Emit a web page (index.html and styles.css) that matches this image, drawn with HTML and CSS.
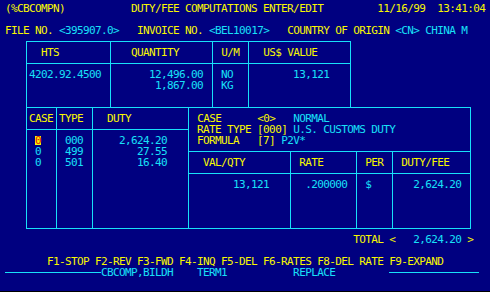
FILE: index.html
```html
<!DOCTYPE html>
<html lang="en">
<head>
<meta charset="utf-8">
<title>duty/fee computations</title>
<link rel="stylesheet" href="styles.css">
</head>
<body>
<div class="screen">
  <!-- box lines, laid on the 80x25 character grid -->
  <div class="lines">
    <div class="box box-a"></div>
    <div class="box box-b"></div>
    <div class="hl h5"></div>
    <div class="hl h11"></div>
    <div class="hl h13"></div>
    <div class="hl h15"></div>
    <div class="vl v17"></div>
    <div class="vl v34"></div>
    <div class="vl v40"></div>
    <div class="vl v8"></div>
    <div class="vl v14"></div>
    <div class="vl v30"></div>
    <div class="vl v47"></div>
    <div class="vl v58"></div>
    <div class="vl v64"></div>
    <div class="ul ul-left"></div>
    <div class="ul ul-right"></div>
  </div>
  <div class="text">
<div class="row y">(%CBCOMPN)           DUTY/FEE COMPUTATIONS ENTER/EDIT         11/16/99  13:41:04</div>
<div class="row"></div>
<div class="row"><span class="y">FILE NO. </span>&lt;395907.0&gt;   <span class="y">INVOICE NO. </span>&lt;BEL10017&gt;   <span class="y">COUNTRY OF ORIGIN </span>&lt;CN&gt; CHINA M</div>
<div class="row"></div>
<div class="row">      <span class="y">HTS</span>            <span class="y">QUANTITY</span>       <span class="y">U/M</span>    <span class="y">US$ VALUE</span></div>
<div class="row"></div>
<div class="row">    4202.92.4500        12,496.00   NO          13,121</div>
<div class="row">                         1,867.00   KG</div>
<div class="row"></div>
<div class="row"></div>
<div class="row">    <span class="y">CASE</span> <span class="y">TYPE</span>    <span class="y">DUTY</span>           <span class="y">CASE      &lt;0&gt;</span>   NORMAL</div>
<div class="row">                                <span class="y">RATE TYPE [000]</span> U.S. CUSTOMS DUTY</div>
<div class="row">     <span class="cur">0</span>    000      2,624.20     <span class="y">FORMULA   [7]</span> P2V*</div>
<div class="row">     0    499         27.55</div>
<div class="row">     0    501         16.40      <span class="y">VAL/QTY</span>         <span class="y">RATE</span>       <span class="y">PER</span>   <span class="y">DUTY/FEE</span></div>
<div class="row"></div>
<div class="row">                                      13,121      .200000   $       2,624.20</div>
<div class="row"></div>
<div class="row"></div>
<div class="row"></div>
<div class="row"></div>
<div class="row">                                                          <span class="y">TOTAL &lt;</span>   2,624.20 <span class="y">&gt;</span></div>
<div class="row"></div>
<div class="row y">       F1-STOP F2-REV F3-FWD F4-INQ F5-DEL F6-RATES F8-DEL RATE F9-EXPAND</div>
<div class="row">                CBCOMP,BILDH    TERM1           REPLACE</div>
  </div>
</div>
</body>
</html>
```

FILE: styles.css
```css
body{
    margin: 0;
    background-color: #000080;
}

.screen{
    display: grid;
    height: 292px;
    box-sizing: border-box;
    padding: 3px 0 0 5px;
    border-bottom: 1px solid #000000;
    font-family: "DejaVu Sans Mono", monospace;
    font-size: 11px;
    letter-spacing: -0.62px;
    color: #18e0f8;
}

.lines, .text{
    grid-area: 1 / 1;
}

/* 80 columns x 25 rows, 6x11 px cells */
.lines{
    display: grid;
    grid-template-columns: repeat(80, 6px);
    grid-template-rows: repeat(25, 11px);
}

.row{
    height: 11px;
    line-height: 11px;
    white-space: pre;
}

.y{
    color: #f8f800;
}

/* cursor cell */
.cur{
    display: inline-block;
    width: 6px;
    height: 9px;
    line-height: 9px;
    vertical-align: top;
    margin-top: 1px;
    background-color: #f8f800;
    color: #e01010;
}

/* lines sit on the middle of their cells */
.box{
    margin: 5px 2px 5px 3px;
    border: 1px solid #18e0f8;
}
.hl{
    margin: 5px 2px 0 3px;
    border-top: 1px solid #18e0f8;
}
.vl{
    margin: 5px 0 5px 3px;
    border-left: 1px solid #18e0f8;
}
.ul{
    margin-top: 5px;
    border-top: 1px solid #18e0f8;
}

.box-a{ grid-row: 4 / 11; grid-column: 4 / 59; }
.box-b{ grid-row: 10 / 22; grid-column: 4 / 79; }

.h5{ grid-row: 6; grid-column: 4 / 59; }
.h11{ grid-row: 12; grid-column: 4 / 32; }
.h13{ grid-row: 14; grid-column: 31 / 79; }
.h15{ grid-row: 16; grid-column: 31 / 79; }

.v17{ grid-row: 4 / 11; grid-column: 18; }
.v34{ grid-row: 4 / 11; grid-column: 35; }
.v40{ grid-row: 4 / 11; grid-column: 41; }
.v8{ grid-row: 10 / 22; grid-column: 9; }
.v14{ grid-row: 10 / 22; grid-column: 15; }
.v30{ grid-row: 10 / 22; grid-column: 31; }
.v47{ grid-row: 14 / 22; grid-column: 48; }
.v58{ grid-row: 14 / 22; grid-column: 59; }
.v64{ grid-row: 14 / 22; grid-column: 65; }

.ul-left{ grid-row: 25; grid-column: 1 / 17; }
.ul-right{ grid-row: 25; grid-column: 65 / 80; }
```
